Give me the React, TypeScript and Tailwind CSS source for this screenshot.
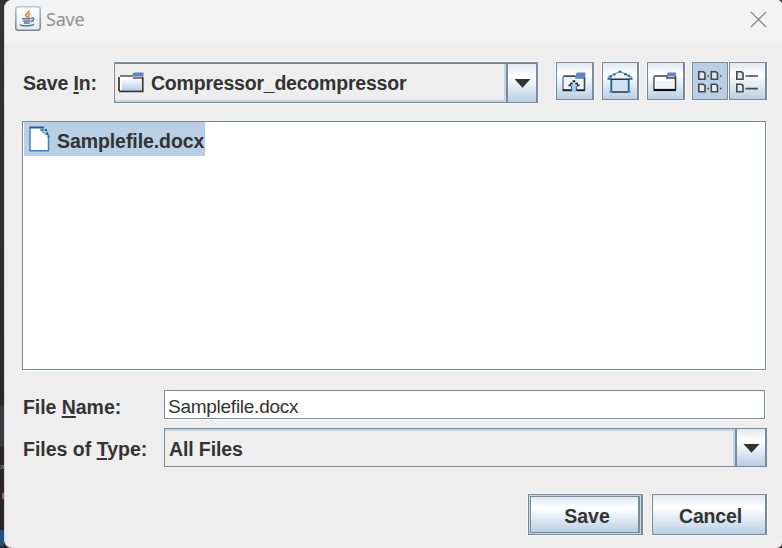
import type { ReactNode } from "react";

const steel = "bg-[linear-gradient(to_bottom,#e0e9f3_0%,#ffffff_32%,#f5f8fb_42%,#b8cfe5_100%)]";
const edge = "border border-r-2 border-[#7a8a99]";

function FolderIcon() {
  return (
    <svg width="26" height="21" viewBox="0 0 26 21" className="block shrink-0">
      <defs>
        <linearGradient id="folder" x1="0" y1="0" x2="0" y2="1">
          <stop offset="0" stopColor="#f4f8fc" />
          <stop offset="1" stopColor="#b8cfe5" />
        </linearGradient>
      </defs>
      <path d="M2 4.5H15V6H24.5V18.5H1.5V5Z" fill="#fff" />
      <path d="M4 8H23V18H4Z" fill="url(#folder)" />
      <path d="M1 19V5M24.7 5V19" stroke="#333" strokeWidth="1.7" />
      <path d="M2 4H15M15 6H24" stroke="#555" strokeWidth="1.3" />
      <path d="M1 19.3H25.5" stroke="#333" strokeWidth="1.8" />
      <path d="M16 0.5H25.5V4.5H14.5V2Z" fill="#6382bf" />
    </svg>
  );
}

function UpFolderIcon() {
  return (
    <svg width="24" height="20" viewBox="0 0 24 20" className="block shrink-0">
      <path d="M1 5L2 4H14V6H23V18H1Z" fill="#edf4fa" />
      <path d="M1 18V5L2 4H14V6H22" fill="none" stroke="#557fa9" strokeWidth="1.4" />
      <path d="M2 4.3H13" stroke="#444" strokeWidth="1.3" />
      <path d="M22.5 5V18" stroke="#444" strokeWidth="1.6" />
      <path d="M0.5 18.2H23" stroke="#222" strokeWidth="2" />
      <path d="M15 0.5H23.3V5.5H14V2Z" fill="#6382bf" />
      <path d="M10 13H14V20H10Z" fill="#a9cae8" />
      <path d="M9.6 14V19M14.4 14V19" stroke="#28659d" strokeWidth="1.3" />
      <path d="M7 13.5L12 8.7L17 13.5Z" fill="#b8d5ed" />
      <path d="M6.5 13.3H9M15 13.3H17.5M8.3 11.5H10.5M13.5 11.5H15.7M10.7 9.2H13.3" stroke="#222" strokeWidth="1.8" />
      <path d="M10.6 12.5H13.4V18H10.6Z" fill="#a9cae8" />
    </svg>
  );
}

function NewFolderIcon() {
  return (
    <svg width="24" height="20" viewBox="0 0 24 20" className="block">
      <path d="M1 5L2 4H14V6H23V18H1Z" fill="#fff" />
      <path d="M3 9H21V17H3Z" fill="#edf3f9" />
      <path d="M1 17V5L2 4H14V6H22" fill="none" stroke="#444" strokeWidth="1.4" />
      <path d="M22.5 4V18" stroke="#333" strokeWidth="1.5" />
      <path d="M0.5 18H23" stroke="#111" strokeWidth="2.2" />
      <path d="M15 0.5H23V4.5H14V2Z" fill="#6382bf" />
    </svg>
  );
}

function HomeIcon() {
  return (
    <svg width="26" height="24" viewBox="0 0 26 24" className="block">
      <path d="M1 8L13 2L25 8V9H1Z" fill="#eef4fa" />
      <path d="M4 9H22V22H4Z" fill="#cfe3f3" />
      <path d="M1 7.3L13 1.5L25 7.3" fill="none" stroke="#6f9bc5" strokeWidth="1.2" />
      <path d="M2.5 6.5H5M6 4.5H8.5M11.7 1.7H14.3M17 4.2H20M20.5 5.7H23" stroke="#28659d" strokeWidth="2" />
      <path d="M0.5 8.7H4M22 8.7H25.5M4.3 9V22M21.7 9V22" stroke="#28659d" strokeWidth="1.9" />
      <path d="M4 9.3H22M5 22H21" stroke="#333" strokeWidth="1.5" />
      <path d="M2.5 22H5M21 22H23.5" stroke="#4d80b0" strokeWidth="1.6" />
    </svg>
  );
}

function MiniFile({ x, y }: { x: number; y: number }) {
  return (
    <path
      transform={`translate(${x} ${y})`}
      d="M0.8 0.8H5.4L7 2.2V8.2H0.8Z"
      fill="#dceafa"
      stroke="#484848"
      strokeWidth="1.6"
    />
  );
}

function GridIcon() {
  return (
    <svg width="24" height="22" viewBox="0 0 24 22" className="block">
      <MiniFile x={0} y={0} />
      <MiniFile x={12.5} y={0} />
      <MiniFile x={0} y={12.5} />
      <MiniFile x={12.5} y={12.5} />
      <path d="M9.5 5H11M22 5H23.5M9.5 17.5H11M22 17.5H23.5" stroke="#444" strokeWidth="1.4" />
    </svg>
  );
}

function ListIcon() {
  return (
    <svg width="24" height="22" viewBox="0 0 24 22" className="block">
      <MiniFile x={1} y={0} />
      <MiniFile x={1} y={12.5} />
      <path d="M10.5 5H23M10.5 17.6H23" stroke="#484848" strokeWidth="1.6" />
    </svg>
  );
}

function FileIcon() {
  return (
    <svg width="21" height="26" viewBox="0 0 21 26" className="block shrink-0">
      <path d="M1 1H12L20 9V25H1Z" fill="#fff" />
      <path d="M1 1V24.7H19.5V9" fill="none" stroke="#4a7eb5" strokeWidth="1.5" />
      <path d="M0.5 1.4H15" stroke="#215c99" strokeWidth="2" />
      <path d="M11.5 4L17 4L19.5 11" fill="none" stroke="#215c99" strokeWidth="1.9" strokeDasharray="3 1" />
      <path d="M12 2L14 6L18 9" fill="none" stroke="#5f8fbe" strokeWidth="1.4" />
    </svg>
  );
}

function JavaIcon() {
  return (
    <svg width="26" height="25" viewBox="0 0 26 25" className="block shrink-0">
      <defs>
        <linearGradient id="java" x1="0" y1="0" x2="0" y2="1">
          <stop offset="0" stopColor="#fff" />
          <stop offset="1" stopColor="#e3e9ee" />
        </linearGradient>
        <linearGradient id="javaEdge" x1="0" y1="0" x2="0" y2="1">
          <stop offset="0" stopColor="#afc6d5" />
          <stop offset="1" stopColor="#6f8798" />
        </linearGradient>
      </defs>
      <rect x="0.8" y="0.8" width="24.4" height="23.4" rx="2.4" fill="url(#java)" stroke="url(#javaEdge)" strokeWidth="1.6" />
      <path d="M14.2 4.5C14.5 7 10.3 7.3 10.8 9.3C11 10.3 12.5 11 12.5 12M15.3 7.5C12 9 15 10 13.2 11.7" fill="none" stroke="#f08a35" strokeWidth="1.8" />
      <path d="M7 12.7H16M8 14.9H15.5M9 16.9H14.8M16.2 12.2C20 11 19 15.3 15.8 15.5M5.5 18.3C4 20.4 17 20.4 19 18" fill="none" stroke="#587c98" strokeWidth="1.5" />
    </svg>
  );
}

function Arrow() {
  return (
    <svg width="17" height="9" viewBox="0 0 17 9" className="block">
      <path d="M0.5 0H16.5L8.5 8.7Z" fill="#333" />
    </svg>
  );
}

function ToolButton({ children, selected = false }: { children: ReactNode; selected?: boolean }) {
  return (
    <button
      className={`flex h-[38px] w-[37.5px] shrink-0 items-center justify-center pt-px ${edge} border-b-[1.5px] shadow-[0_0_0_1px_#f7f7f7] ${selected ? "bg-[#b8cfe5]" : steel}`}
    >
      {children}
    </button>
  );
}

export default function App() {
  return (
    <div className="flex h-[548px] w-[782px] overflow-hidden bg-[linear-gradient(to_bottom,#333_0px,#292929_405px,#3b3b3f_406px,#3b3b3f_446px,#292625_447px)] font-['Liberation_Sans',Arial,sans-serif] text-[19.5px] leading-[22px] text-[#333]">
      <div className="relative w-1 shrink-0 text-[8px] leading-[10px] text-[#888]">
        <span className="absolute left-0 top-[462px]">a</span>
        <span className="absolute left-[2px] top-[493px] h-[6px] w-[2px] bg-[#a45d5b]" />
        <span className="absolute left-0 top-[530px] h-[16px] w-1 bg-[#214f86]" />
      </div>
      <main className="flex w-[778px] shrink-0 flex-col overflow-hidden rounded-l-[8px] rounded-r-[5px] border-l border-[#d9d9d9] bg-[#eee]">
        <header className="flex h-[43px] shrink-0 items-start justify-between bg-[#f3f3f3] pl-[10px] pr-[15px] pt-[6px]">
          <div className="flex">
            <JavaIcon />
            <span className="ml-[5px] mt-px font-['Noto_Sans',sans-serif] text-[18px] leading-[24px] tracking-[-0.2px] text-[#909090]">Save</span>
          </div>
          <svg width="17" height="17" viewBox="0 0 17 17" className="mt-[5px] block">
            <path d="M1 1L16 16M16 1L1 16" stroke="#8b8b8b" strokeWidth="1.3" />
          </svg>
        </header>

        <div className="mt-[19px] flex h-[41px] shrink-0 pl-[18px] font-bold">
          <label className="w-[91px] pt-[10px] tracking-[-0.1px]">Save <u className="decoration-[2px] underline-offset-[2px]">I</u>n:</label>
          <div className={`flex h-[41px] w-[424px] ${edge} border-t-2 border-b-[1.5px] shadow-[0_0_0_1px_#f7f7f7]`}>
            <div className="flex min-w-0 flex-1 items-center border-b-2 border-r-2 border-[#c3d6e9] pl-[3px]">
              <FolderIcon />
              <span className="ml-[7px] mt-[2px] tracking-[-0.21px]">Compressor_decompressor</span>
            </div>
            <div className={`flex w-[30px] items-center justify-center border-l-2 border-[#7a8a99] ${steel}`}><Arrow /></div>
          </div>
          <div className="ml-[18px] flex gap-[8px]">
            <ToolButton><UpFolderIcon /></ToolButton>
            <ToolButton><HomeIcon /></ToolButton>
            <ToolButton><NewFolderIcon /></ToolButton>
            <div className="-ml-px flex">
              <ToolButton selected><GridIcon /></ToolButton>
              <ToolButton><ListIcon /></ToolButton>
            </div>
          </div>
        </div>

        <div className="ml-[17px] mt-[18px] h-[249px] w-[744px] shrink-0 border border-[#7a8a99] bg-white pl-px shadow-[1px_1px_0_#fff]">
          <div className="flex h-[34px] w-[181px] items-center bg-[#b8cfe5] pl-[5px] font-bold">
            <FileIcon />
            <span className="ml-[7px] mt-[4px] tracking-[-0.08px]">Samplefile.docx</span>
          </div>
        </div>

        <div className="mt-[20px] flex h-[29px] shrink-0 pl-[18px]">
          <label className="w-[141px] pt-[6px] font-bold tracking-[-0.05px]">File <u className="decoration-[1.5px] underline-offset-[2px]">N</u>ame:</label>
          <div className="w-[601px] border border-[#7a8a99] bg-white pl-[3px] pt-[6px] text-[19px] leading-[20px] tracking-[-0.26px] shadow-[1px_1px_0_#fff]">Samplefile.docx</div>
        </div>

        <div className="mt-[9px] flex h-[39px] shrink-0 pl-[18px] font-bold">
          <label className="w-[141px] pt-[10px]">Files of <u className="decoration-[2px] underline-offset-[2px]">T</u>ype:</label>
          <div className={`flex w-[603px] ${edge} border-b-[1.5px]`}>
            <div className="flex flex-1 items-center border-r-2 border-t-2 border-[#c3d6e9] pl-[4px] tracking-[-0.12px]">All Files</div>
            <div className={`flex w-[30px] items-center justify-center border-l-2 border-[#7a8a99] pt-px ${steel}`}><Arrow /></div>
          </div>
        </div>

        <div className="mt-[27px] flex h-[41px] shrink-0 justify-end gap-[9px] pr-[15px] font-bold">
          <button className={`w-[115px] ${edge} border-b-[1.5px] bg-[#c7d9e9] p-px shadow-[0_0_0_1px_#f7f7f7]`}>
            <span className={`flex h-full items-center justify-center border border-r-2 border-[#7a8a99] pl-[5px] pt-[3px] ${steel}`}>Save</span>
          </button>
          <button className={`flex w-[115px] items-center justify-center ${edge} border-b-[1.5px] pl-[3px] pt-[3px] tracking-[-0.15px] shadow-[0_0_0_1px_#f7f7f7] ${steel}`}>Cancel</button>
        </div>
      </main>
    </div>
  );
}
